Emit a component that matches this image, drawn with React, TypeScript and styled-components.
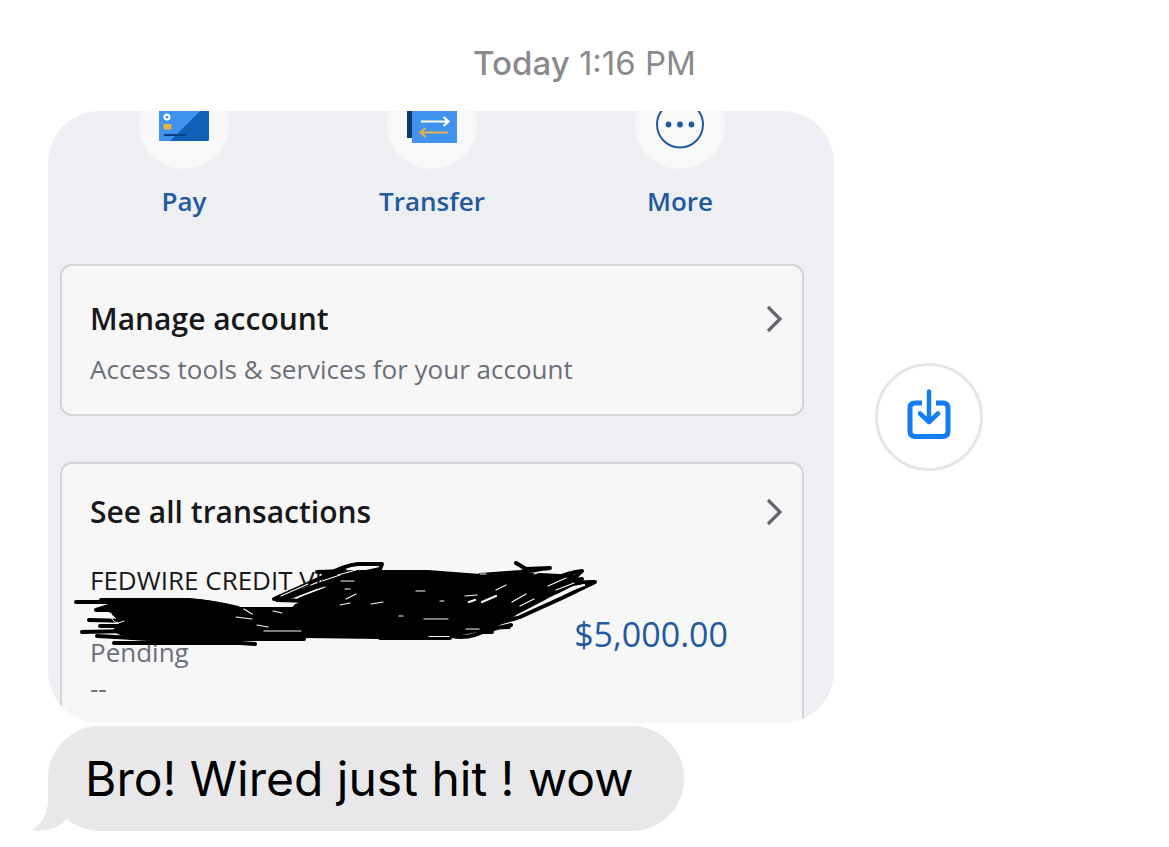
import styled, { createGlobalStyle } from "styled-components";

const GlobalStyle = createGlobalStyle`
    * {
        box-sizing: border-box;
    }
    body {
        margin: 0;
        background-color: #fff;
        font-family: Inter, "Liberation Sans", sans-serif;
    }
    button {
        border: none;
        background: none;
        padding: 0;
        font: inherit;
        color: inherit;
        text-align: left;
        cursor: pointer;
    }
`

const Thread = styled.main`
    display: flex;
    flex-direction: column;
    padding: 43px 48px 16px;
`

const Timestamp = styled.time`
    color: #8a8a8d;
    font-size: 33px;
    line-height: 40px;
    text-align: center;
    margin-bottom: 28px;

    strong {
        font-weight: 500;
    }
`

const PhotoRow = styled.div`
    display: flex;
    align-items: center;
    gap: 41px;
    margin-bottom: 3px;
`

const Photo = styled.section`
    flex: 1;
    max-width: 786px;
    border-radius: 52px;
    overflow: hidden;
    background-color: #eeeff3;
    padding: 0 30px 0 12px;
    font-family: "Open Sans", "Noto Sans", sans-serif;
`

const Actions = styled.nav`
    display: grid;
    grid-template-columns: repeat(3, 1fr);
    margin-top: -32px;
    margin-bottom: 45px;
`

const Action = styled.button`
    display: flex;
    flex-direction: column;
    align-items: center;
    gap: 14px;
    color: #205a9f;
    font-size: 26px;
    font-weight: 600;
    line-height: 36px;
    text-align: center;
`

const ActionIcon = styled.span`
    display: flex;
    align-items: center;
    justify-content: center;
    width: 90px;
    height: 90px;
    border-radius: 50%;
    background-color: #f8f8f8;
`

const Panel = styled.article<{ $cut?: boolean }>`
    border: 2px solid #d3d4d8;
    border-radius: ${({ $cut }) => ($cut ? "12px 12px 0 0" : "12px")};
    border-bottom-width: ${({ $cut }) => ($cut ? "0" : "2px")};
    background-color: #f7f7f7;
    padding: ${({ $cut }) => ($cut ? "26px 18px 17px 28px" : "31px 18px 27px 28px")};
    margin-bottom: ${({ $cut }) => ($cut ? "0" : "46px")};
`

const PanelLink = styled.button`
    display: flex;
    justify-content: space-between;
    align-items: center;
    width: 100%;
    color: #17181c;
    font-size: 30px;
    font-weight: 600;
    line-height: 44px;
`

const PanelNote = styled.p`
    margin: 10px 0 0;
    color: #6b6f78;
    font-size: 26px;
    line-height: 36px;
`

const Transaction = styled.div`
    position: relative;
    display: flex;
    justify-content: space-between;
    align-items: center;
    padding-right: 56px;
    margin-top: 28px;
`

const Details = styled.div`
    font-size: 26px;
    line-height: 36px;
`

const DetailLine = styled.p<{ $muted?: boolean }>`
    margin: 0;
    min-height: 36px;
    color: ${({ $muted }) => ($muted ? "#6b6f78" : "#17181c")};
`

const Amount = styled.p`
    margin: 0;
    color: #205a9f;
    font-size: 34px;
    line-height: 40px;
`

const Scribble = styled.svg`
    position: absolute;
    top: -4px;
    left: -20px;
    width: 530px;
    height: 94px;
`

const SaveButton = styled.button`
    display: flex;
    flex: none;
    align-items: center;
    justify-content: center;
    width: 108px;
    height: 108px;
    border: 3px solid #e6e6e8;
    border-radius: 50%;
    color: #147cf5;
`

const Bubble = styled.p`
    position: relative;
    z-index: 0;
    align-self: flex-start;
    margin: 0;
    padding: 23px 50px 22px 37px;
    border-radius: 52px;
    background-color: #e8e8ea;
    color: #000;
    font-size: 48px;
    line-height: 60px;
`

const Tail = styled.svg`
    position: absolute;
    z-index: -1;
    left: -16px;
    bottom: 0;
    width: 60px;
    height: 52px;
`

const Chevron = () => (
    <svg width="20" height="28" viewBox="0 0 20 28" fill="none" stroke="#63666f" strokeWidth="3.2" aria-hidden="true">
        <path d="M4 2 L16 14 L4 26" />
    </svg>
)

const PayIcon = () => (
    <svg width="50" height="34" viewBox="0 0 50 34" aria-hidden="true">
        <rect width="50" height="34" rx="1.500" fill="#1160b7" />
        <path d="M1 0 H45 L11 34 H1.500 Q0 34 0 32.500 V0Z" fill="#3f93ec" />
        <circle cx="8" cy="10" r="2.500" fill="none" stroke="#fff" strokeWidth="2" />
        <rect x="4.500" y="17" width="8" height="5.500" rx="1" fill="#f0b13f" />
        <path d="M5 28 H27" stroke="#0b3f80" strokeWidth="2.200" />
    </svg>
)

const TransferIcon = () => (
    <svg width="50" height="38" viewBox="0 0 50 38" aria-hidden="true">
        <rect width="46" height="33" fill="#0f3768" />
        <rect x="5" y="2" width="45" height="36" fill="#3f93ec" />
        <g fill="none" strokeWidth="2.200">
            <path d="M14 16.500 H41 M36.500 12 L41.500 16.500 L36.500 21" stroke="#fff" />
            <path d="M41 27.500 H14 M18.500 23 L13.500 27.500 L18.500 32" stroke="#eab04a" />
        </g>
    </svg>
)

const MoreIcon = () => (
    <svg width="50" height="50" viewBox="0 0 50 50" aria-hidden="true">
        <circle cx="25" cy="25.500" r="23" fill="none" stroke="#205a9f" strokeWidth="2" />
        <g fill="#205a9f">
            <circle cx="13.500" cy="25.500" r="2.900" />
            <circle cx="25" cy="25.500" r="2.900" />
            <circle cx="36.500" cy="25.500" r="2.900" />
        </g>
    </svg>
)

const SaveIcon = () => (
    <svg width="46" height="56" viewBox="0 0 46 56" fill="none" stroke="currentColor" aria-hidden="true">
        <path d="M16 14 H9 Q4 14 4 19 V42 Q4 47.500 9.500 47.500 H36.500 Q42 47.500 42 42 V19 Q42 14 37 14 H30" strokeWidth="5" />
        <path d="M23 2.500 V32 M14 24.500 L23 33 L32 24.500" strokeWidth="4.500" strokeLinecap="round" strokeLinejoin="round" />
    </svg>
)

// marker strokes drawn over the sender name
const Redaction = () => (
    <Scribble viewBox="70 558 530 94" fill="none" aria-hidden="true">
        <path
            fill="#000"
            d="M110 600 L188 598 Q215 600 238 607 L292 607 L302 600 L320 590 L322 572 L352 570 L380 570 L428 570 L480 574 L520 572 L560 574 L580 575 L574 583 L545 600 L518 614 L500 625 L478 632 L452 637 L380 639 L304 638 L250 640 L235 643 L130 640 L112 631 L120 622 L108 611Z"
        />
        <g stroke="#000" strokeWidth="4" strokeLinecap="round" strokeLinejoin="round">
            <path d="M76 602 H122 L96 610 H150 M89 620 L130 621 M82 632 L130 631 M100 626 H140 M97 636 L170 640 M114 643 H240 L255 644" />
            <path d="M101 600 H185 Q215 602 238 608 M200 639 H304" />
            <path d="M274 599 L325 576 Q345 565 358 564 L382 564 L380 569 L335 579 L277 600 L310 601 L345 590" />
            <path d="M317 572 L345 571 M288 598 L350 574 M300 599 L355 577" />
            <path d="M304 600 L372 572 M310 604 L380 580 M296 606 L345 594" />
            <path d="M516 563 L526 569 L550 568 L520 572 L480 575" />
            <path d="M552 580 Q570 572 582 571 L575 577 L535 595 M545 584 L582 579 L555 593 L515 608" />
            <path d="M540 594 Q572 581 595 582 L562 598 L520 617 M517 618 L480 628 L509 627 M511 625 L480 632 H492" />
            <path d="M452 636 Q470 640 490 628 M380 638 H450" />
        </g>
        <g stroke="#f7f7f7" strokeWidth="1.200" strokeLinecap="round">
            <path d="M281 596 L308 584 M296 598 L325 587 M322 581 L340 575 M338 575 L356 570 M311 592 L322 588" />
            <path d="M416 591 H425 M465 596 L477 595 M346 599 L356 594 M371 604 L383 602 M340 605 L350 603 M341 581 H354 M345 589 H350 M440 601 H444" />
            <path d="M236 617 L252 619 M244 609 L252 614 M273 611 L282 613 M257 625 L268 627 M424 619 H448 M399 616 H403 M264 631 H301 M466 629 H479 M429 636.500 H449 M480 574 H486 M534 574 L544 571" />
            <path d="M512 602 L526 594 M520 606 L534 599 M548 586 L566 578 M556 590 L574 583 M496 590 L506 585" />
            <path d="M111 613 Q110 621 118 623 L124 621" strokeWidth="1" />
        </g>
        <g stroke="#f7f7f7" strokeWidth="2.200" strokeLinecap="round">
            <path d="M555 596 L584 585 M482 602 L496 596 M469 602 L475 600" />
        </g>
    </Scribble>
)

const App = () => {
    return (
        <>
            <GlobalStyle />
            <Thread>
                <Timestamp>
                    <strong>Today</strong> 1:16 PM
                </Timestamp>
                <PhotoRow>
                    <Photo>
                        <Actions>
                            <Action type="button">
                                <ActionIcon><PayIcon /></ActionIcon>
                                Pay
                            </Action>
                            <Action type="button">
                                <ActionIcon><TransferIcon /></ActionIcon>
                                Transfer
                            </Action>
                            <Action type="button">
                                <ActionIcon><MoreIcon /></ActionIcon>
                                More
                            </Action>
                        </Actions>
                        <Panel>
                            <PanelLink type="button">
                                Manage account
                                <Chevron />
                            </PanelLink>
                            <PanelNote>Access tools &amp; services for your account</PanelNote>
                        </Panel>
                        <Panel $cut>
                            <PanelLink type="button">
                                See all transactions
                                <Chevron />
                            </PanelLink>
                            <Transaction>
                                <Details>
                                    <DetailLine>FEDWIRE CREDIT VIA</DetailLine>
                                    <DetailLine />
                                    <DetailLine $muted>Pending</DetailLine>
                                    <DetailLine $muted>--</DetailLine>
                                </Details>
                                <Amount>$5,000.00</Amount>
                                <Redaction />
                            </Transaction>
                        </Panel>
                    </Photo>
                    <SaveButton type="button" aria-label="Save photo">
                        <SaveIcon />
                    </SaveButton>
                </PhotoRow>
                <Bubble>
                    <Tail viewBox="0 0 60 52" aria-hidden="true">
                        <path d="M16 0 V22 Q15 42 0 51 Q20 55 35 40 L60 40 V0Z" fill="#e8e8ea" />
                    </Tail>
                    Bro! Wired just hit ! wow
                </Bubble>
            </Thread>
        </>
    )
}

export default App
